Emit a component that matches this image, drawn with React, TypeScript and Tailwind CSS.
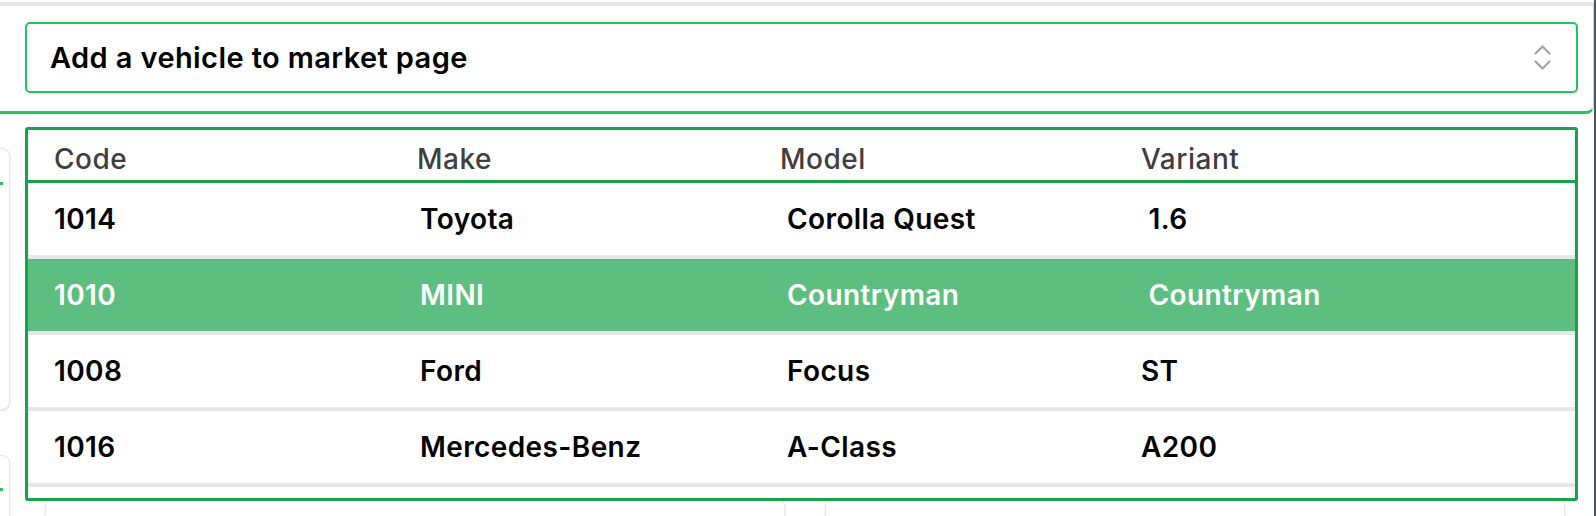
import React from "react";

const rows = [
  { code: "1014", make: "Toyota", model: "Corolla Quest", variant: "\u00a01.6", active: false },
  { code: "1010", make: "MINI", model: "Countryman", variant: "\u00a0Countryman", active: true },
  { code: "1008", make: "Ford", model: "Focus", variant: "ST", active: false },
  { code: "1016", make: "Mercedes-Benz", model: "A-Class", variant: "A200", active: false },
];

function UpDown() {
  return (
    <svg width="17" height="27" viewBox="0 0 17 27" fill="none" stroke="#a3a3a3" strokeWidth="2.2" strokeLinecap="round" strokeLinejoin="round">
      <path d="M1.5 9.5 L8.5 2.5 L15.5 9.5" />
      <path d="M1.5 17.5 L8.5 24.5 L15.5 17.5" />
    </svg>
  );
}

export default function App() {
  return (
    <div
      className="relative w-[1596px] h-[516px] overflow-hidden bg-white border-r-2 border-[#4b5563]"
      style={{ fontFamily: "Inter, 'Noto Sans', sans-serif" }}
    >
      {/* Picker panel */}
      <div className="mt-[2px] h-[112px] border-t-4 border-b-[3px] border-r border-t-[#e5e7eb] border-b-[#22c55e] border-r-[#d1d5db] rounded-br-lg bg-white pt-[16px] pl-[25px] pr-[16px]">
        <button className="w-[1553px] h-[71px] flex items-center justify-between border-2 border-[#22c55e] rounded-[5px] pl-[23px] pr-[25px] text-left">
          <span className="text-[29px] font-semibold text-black tracking-[0.4px]">Add a vehicle to market page</span>
          <UpDown />
        </button>
      </div>

      {/* Page content underneath */}
      <div className="relative">
        <div className="flex flex-col gap-[45px] pt-[34px]">
          <div className="relative w-[10px] h-[262px] bg-white border border-l-0 border-[#e5e7eb] rounded-r-lg shadow-sm">
            <div className="absolute left-0 top-[33px] w-[3px] h-[3px] bg-[#22c55e]" />
          </div>
          <div className="relative w-[10px] h-[80px] bg-white border border-l-0 border-[#e5e7eb] rounded-r-lg shadow-sm">
            <div className="absolute left-0 top-[32px] w-[3px] h-[3px] bg-[#22c55e]" />
          </div>
        </div>
        <div className="absolute left-[45px] top-[384px] flex gap-[40px]">
          <div className="w-[740px] h-[40px] bg-white border border-[#e5e7eb] rounded-lg shadow-sm" />
          <div className="w-[740px] h-[40px] bg-white border border-[#e5e7eb] rounded-lg shadow-sm" />
        </div>

        {/* Dropdown list */}
        <div className="absolute left-[25px] top-[13px] w-[1553px] h-[374px] bg-white border-[3px] border-[#16a34a] rounded-[3px] overflow-hidden">
          <div className="grid grid-cols-[363px_363px_361px_1fr] h-[53px] items-center pl-[26px] pt-[8px] border-b-[3px] border-[#16a34a] text-[28px] font-medium text-[#3f3f3f] tracking-[0.5px]">
            <div>Code</div>
            <div>Make</div>
            <div>Model</div>
            <div>Variant</div>
          </div>
          {rows.map((r) => (
            <div
              key={r.code}
              className={`grid grid-cols-[366px_367px_354px_1fr] h-[76px] items-center pl-[26px] border-b-4 border-[#e5e7eb] text-[28px] font-semibold tracking-[0.4px] ${
                r.active ? "bg-[#5cbf80] text-white" : "bg-white text-black"
              }`}
            >
              <div>{r.code}</div>
              <div>{r.make}</div>
              <div>{r.model}</div>
              <div>{r.variant}</div>
            </div>
          ))}
        </div>
      </div>
    </div>
  );
}
